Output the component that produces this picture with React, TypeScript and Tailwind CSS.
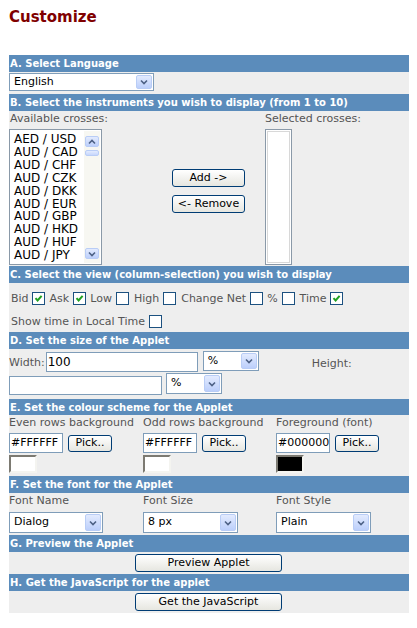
import React from "react";

const crosses = [
  "AED / USD",
  "AUD / CAD",
  "AUD / CHF",
  "AUD / CZK",
  "AUD / DKK",
  "AUD / EUR",
  "AUD / GBP",
  "AUD / HKD",
  "AUD / HUF",
  "AUD / JPY",
];

function Bar({ children, h = "h-[17px]" }: { children: React.ReactNode; h?: string }) {
  return (
    <div className={`${h} bg-[#5b8cbb] text-white font-bold text-[10px] flex items-center pl-[1px] whitespace-nowrap`}>
      {children}
    </div>
  );
}

function Chevron({ up }: { up?: boolean }) {
  return (
    <svg width="8" height="6" viewBox="0 0 8 6">
      <path
        d={up ? "M1 4.5 L4 1.5 L7 4.5" : "M1 1.5 L4 4.5 L7 1.5"}
        stroke="#4d6185"
        strokeWidth="1.6"
        fill="none"
      />
    </svg>
  );
}

function ArrowBox({ up, className = "" }: { up?: boolean; className?: string }) {
  return (
    <span
      className={`flex items-center justify-center rounded-[2px] border border-[#b9cdf6] bg-gradient-to-b from-[#e3ebfe] to-[#bccffb] ${className}`}
    >
      <Chevron up={up} />
    </span>
  );
}

function Select({ text, w, h = "h-[20px]", className = "" }: { text: string; w: string; h?: string; className?: string }) {
  return (
    <div className={`${w} ${h} ${className} border border-[#7f9db9] bg-white flex items-stretch p-[1px] shrink-0`}>
      <span className="flex-1 flex items-center pl-[3px] text-[11px] text-black">{text}</span>
      <ArrowBox className="w-[16px]" />
    </div>
  );
}

function Input({ value = "", w, h = "h-[20px]", className = "" }: { value?: string; w: string; h?: string; className?: string }) {
  return (
    <div className={`${w} ${h} ${className} border border-[#7f9db9] bg-white flex items-center pl-[1px] text-[11px] text-black overflow-hidden whitespace-nowrap shrink-0`}>
      {value}
    </div>
  );
}

function Btn({ children, className = "" }: { children: React.ReactNode; className?: string }) {
  return (
    <div
      className={`border border-[#003c74] rounded-[3px] bg-gradient-to-b from-white to-[#e6e6e0] flex items-center justify-center text-[11px] text-black shrink-0 ${className}`}
    >
      {children}
    </div>
  );
}

function Check({ on, className = "" }: { on?: boolean; className?: string }) {
  return (
    <span className={`flex w-[13px] h-[13px] border border-[#1c5180] bg-white items-center justify-center shrink-0 ${className}`}>
      {on && (
        <svg width="9" height="9" viewBox="0 0 9 9">
          <path d="M1.5 4.2 L3.6 6.5 L7.6 1.8" stroke="#21a121" strokeWidth="2" fill="none" />
        </svg>
      )}
    </span>
  );
}

function Swatch({ color }: { color: string }) {
  return (
    <div
      className={`w-[28px] h-[18px] border-2 border-t-[#7c7a72] border-l-[#7c7a72] border-r-[#f4f4f0] border-b-[#f4f4f0] ${color}`}
    />
  );
}

export default function App() {
  const label = "text-[11px] text-[#555555] whitespace-nowrap";

  return (
    <main className="min-h-screen bg-white font-['DejaVu_Sans',Verdana,sans-serif]">

      {/* Title */}
      <div className="h-[55px] pl-[9px] pt-[8px]">
        <h1 className="text-[15px] leading-[18px] font-bold text-[#800000]">Customize</h1>
      </div>

      <div className="ml-[9px] w-[400px] bg-[#eeeeee]">

        {/* A */}
        <Bar>A. Select Language</Bar>
        <div className="h-[22px] pt-[1px]">
          <Select text="English" w="w-[145px]" h="h-[18px]" />
        </div>

        {/* B */}
        <Bar>B. Select the instruments you wish to display (from 1 to 10)</Bar>
        <div className="flex h-[155px]">
          <div className="w-[93px]">
            <div className={`${label} h-[17px] flex items-center pl-[1px]`}>Available crosses:</div>
            <div className="mt-[1px] h-[136px] border border-[#8a99a8] p-[1px] bg-white flex">
              <div className="flex-1 pl-[3px] pt-[2px] text-[12px] leading-[12.9px] text-black whitespace-nowrap overflow-hidden">
                {crosses.map((c) => (
                  <div key={c}>{c}</div>
                ))}
              </div>
              <div className="w-[16px] bg-[#f7f7f2] flex flex-col p-[1px] pt-[5px] pb-[4px]">
                <ArrowBox up className="h-[11px]" />
                <span className="mt-[3px] h-[6px] rounded-[2px] border border-[#b9cdf6] bg-gradient-to-b from-[#e3ebfe] to-[#c6d6fc]" />
                <span className="flex-1" />
                <ArrowBox className="h-[11px]" />
              </div>
            </div>
          </div>
          <div className="w-[163px] pl-[70px] pt-[58px] flex flex-col gap-[8px]">
            <Btn className="w-[73px] h-[18px]">Add -&gt;</Btn>
            <Btn className="w-[73px] h-[18px]">&lt;- Remove</Btn>
          </div>
          <div>
            <div className={`${label} h-[17px] flex items-center`}>Selected crosses:</div>
            <div className="mt-[1px] w-[27px] h-[136px] border border-[#8a99a8] p-[1px] bg-white">
              <div className="h-full border border-[#d8d8d8]" />
            </div>
          </div>
        </div>

        {/* C */}
        <Bar>C. Select the view (column-selection) you wish to display</Bar>
        <div className="h-[49px] pl-[2px] pt-[9px]">
          <div className={`${label} h-[13px] leading-[13px] flex items-center`}>
            <span>Bid</span>
            <Check on className="ml-[3px]" />
            <span className="ml-[5px]">Ask</span>
            <Check on className="ml-[4px]" />
            <span className="ml-[4px]">Low</span>
            <Check className="ml-[4px]" />
            <span className="ml-[5px]">High</span>
            <Check className="ml-[4px]" />
            <span className="ml-[5px]">Change Net</span>
            <Check className="ml-[4px]" />
            <span className="ml-[4px]">%</span>
            <Check className="ml-[4px]" />
            <span className="ml-[5px]">Time</span>
            <Check on className="ml-[3px]" />
          </div>
          <div className={`${label} h-[13px] leading-[13px] mt-[10px] flex items-center`}>
            <span>Show time in Local Time</span>
            <Check className="ml-[4px]" />
          </div>
        </div>

        {/* D */}
        <Bar>D. Set the size of the Applet</Bar>
        <div className="h-[50px]">
          <div className="h-[24px] flex items-start">
            <span className={`${label} mt-[8px] leading-[11px]`}>Width:</span>
            <Input value="100" w="w-[152px]" className="mt-[3px] ml-[1px] text-[12px]" />
            <Select text="%" w="w-[56px]" className="mt-[2px] ml-[5px]" />
            <span className={`${label} mt-[9px] leading-[11px] ml-[53px]`}>Height:</span>
          </div>
          <div className="h-[24px] flex items-start">
            <Input w="w-[153px]" h="h-[19px]" className="mt-[3px]" />
            <Select text="%" w="w-[56px]" h="h-[21px]" className="ml-[4px]" />
          </div>
        </div>

        {/* E */}
        <Bar h="h-[16px]">E. Set the colour scheme for the Applet</Bar>
        <div className="h-[61px] grid grid-cols-[134px_133px_133px]">
          {[
            { t: "Even rows background", v: "#FFFFFF", c: "bg-white" },
            { t: "Odd rows background", v: "#FFFFFF", c: "bg-white" },
            { t: "Foreground (font)", v: "#000000", c: "bg-black" },
          ].map((col) => (
            <div key={col.t}>
              <div className={`${label} h-[17px] flex items-center`}>{col.t}</div>
              <div className="mt-[1px] flex items-start">
                <Input value={col.v} w="w-[54px]" />
                <Btn className="ml-[5px] mt-[2px] w-[44px] h-[17px]">Pick..</Btn>
              </div>
              <div className="mt-[2px]">
                <Swatch color={col.c} />
              </div>
            </div>
          ))}
        </div>

        {/* F */}
        <Bar>F. Set the font for the Applet</Bar>
        <div className="h-[42px] grid grid-cols-[134px_133px_133px]">
          <div>
            <div className={`${label} h-[17px] flex items-center`}>Font Name</div>
            <Select text="Dialog" w="w-[94px]" h="h-[21px]" className="mt-[2px]" />
          </div>
          <div>
            <div className={`${label} h-[17px] flex items-center`}>Font Size</div>
            <Select text="8 px" w="w-[95px]" h="h-[21px]" className="mt-[2px]" />
          </div>
          <div>
            <div className={`${label} h-[17px] flex items-center`}>Font Style</div>
            <Select text="Plain" w="w-[95px]" h="h-[21px]" className="mt-[2px]" />
          </div>
        </div>

        {/* G */}
        <Bar>G. Preview the Applet</Bar>
        <div className="h-[22px] pt-[2px] pl-[126px]">
          <Btn className="w-[147px] h-[18px]">Preview Applet</Btn>
        </div>

        {/* H */}
        <Bar>H. Get the JavaScript for the applet</Bar>
        <div className="h-[22px] pt-[2px] pl-[126px]">
          <Btn className="w-[147px] h-[18px]">Get the JavaScript</Btn>
        </div>

      </div>

    </main>
  );
}
